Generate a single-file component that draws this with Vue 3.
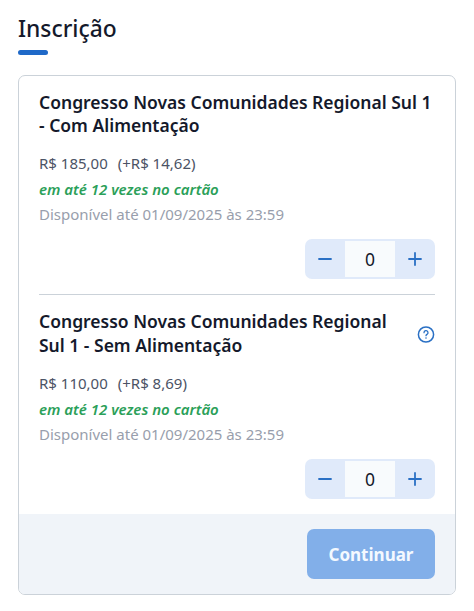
<script setup>
import { ref } from 'vue'

const tickets = ref([
  {
    id: 1,
    name: 'Congresso Novas Comunidades Regional Sul 1 - Com Alimentação',
    price: 'R$ 185,00',
    fee: '(+R$ 14,62)',
    help: false,
    quantity: 0
  },
  {
    id: 2,
    name: 'Congresso Novas Comunidades Regional Sul 1 - Sem Alimentação',
    price: 'R$ 110,00',
    fee: '(+R$ 8,69)',
    help: true,
    quantity: 0
  }
])

const remove = (ticket) => {
  if (ticket.quantity > 0) ticket.quantity--
}

const add = (ticket) => {
  ticket.quantity++
}
</script>

<template>
  <div class="container">
    <h1>Inscrição</h1>

    <div class="card">
      <div class="tickets">
        <div v-for="t in tickets" :key="t.id" class="ticket">
          <div class="head">
            <h2>{{ t.name }}</h2>
            <svg v-if="t.help" class="help" viewBox="0 0 18 18" fill="none" stroke="#2a70c4" stroke-width="1.5">
              <circle cx="9" cy="9.5" r="7.6" />
              <path d="M7 7.7a2 2 0 1 1 3 1.7c-.7.4-1 .7-1 1.3" stroke-width="1.3" stroke-linecap="round" />
              <circle cx="9" cy="13" r=".8" fill="#2a70c4" stroke="none" />
            </svg>
          </div>
          <p class="price"><span>{{ t.price }}</span><span>{{ t.fee }}</span></p>
          <p class="installments">em até 12 vezes no cartão</p>
          <p class="available">Disponível até 01/09/2025 às 23:59</p>
          <div class="counter">
            <button aria-label="Remover" @click="remove(t)">
              <svg viewBox="0 0 14 14"><path d="M1 7h12" /></svg>
            </button>
            <span class="quantity">{{ t.quantity }}</span>
            <button aria-label="Adicionar" @click="add(t)">
              <svg viewBox="0 0 14 14"><path d="M1 7h12M7 1v12" /></svg>
            </button>
          </div>
        </div>
      </div>

      <div class="footer">
        <button class="continue">Continuar</button>
      </div>
    </div>
  </div>
</template>

<style>
body {
  margin: 0;
  background: #fff;
}
</style>

<style scoped>
.container {
  padding: 13px 18px 16px;
  font-family: "Noto Sans", sans-serif;
  color: #14192b;
}

h1 {
  margin: 0 0 20px;
  font-size: 22.8px;
  line-height: 32px;
  font-weight: 500;
}

h1::after {
  content: "";
  display: block;
  width: 30px;
  height: 5px;
  margin-top: 5px;
  border-radius: 3px;
  background: #1f69c8;
}

.card {
  box-sizing: border-box;
  height: 520px;
  border: 1px solid #cbd2d9;
  border-radius: 7px;
  overflow: hidden;
}

.tickets {
  padding: 0 20px;
}

.ticket {
  padding: 15px 0;
}

.ticket + .ticket {
  border-top: 1px solid #cbd2d9;
}

.head {
  display: flex;
  align-items: center;
  justify-content: space-between;
  gap: 24px;
  margin-bottom: 14.6px;
}

h2 {
  margin: 0;
  font-size: 17.5px;
  line-height: 23.4px;
  font-weight: 600;
}

.help {
  flex: none;
  width: 18px;
  height: 18px;
}

p {
  margin: 0;
  font-size: 15px;
  line-height: 22px;
}

.price {
  display: flex;
  gap: 10px;
  color: #4b5365;
}

.installments {
  margin-top: 4px;
  font-weight: 600;
  font-style: italic;
  color: #2b9f59;
}

.available {
  margin-top: 3px;
  color: #989eac;
}

.counter {
  display: flex;
  width: 130px;
  height: 40px;
  margin: 14px 0 0 auto;
  border-radius: 7px;
  overflow: hidden;
  background: #e0eafa;
}

.counter button {
  display: flex;
  align-items: center;
  justify-content: center;
  width: 40px;
  padding: 0;
  border: 0;
  background: transparent;
}

.counter svg {
  width: 14px;
  height: 14px;
  fill: none;
  stroke: #2a70c4;
  stroke-width: 1.8;
  stroke-linecap: round;
}

.quantity {
  width: 50px;
  margin: 2px 0;
  background: #f8fbfd;
  font-size: 17.5px;
  line-height: 36px;
  text-align: center;
}

.footer {
  display: flex;
  justify-content: flex-end;
  padding: 15px 20px;
  background: #f0f4f9;
}

.continue {
  width: 128px;
  height: 50px;
  padding: 2px 0 0;
  border: 0;
  border-radius: 7px;
  background: #82afe9;
  color: #f4f9ff;
  font-family: inherit;
  font-size: 17px;
  font-weight: 700;
}
</style>
